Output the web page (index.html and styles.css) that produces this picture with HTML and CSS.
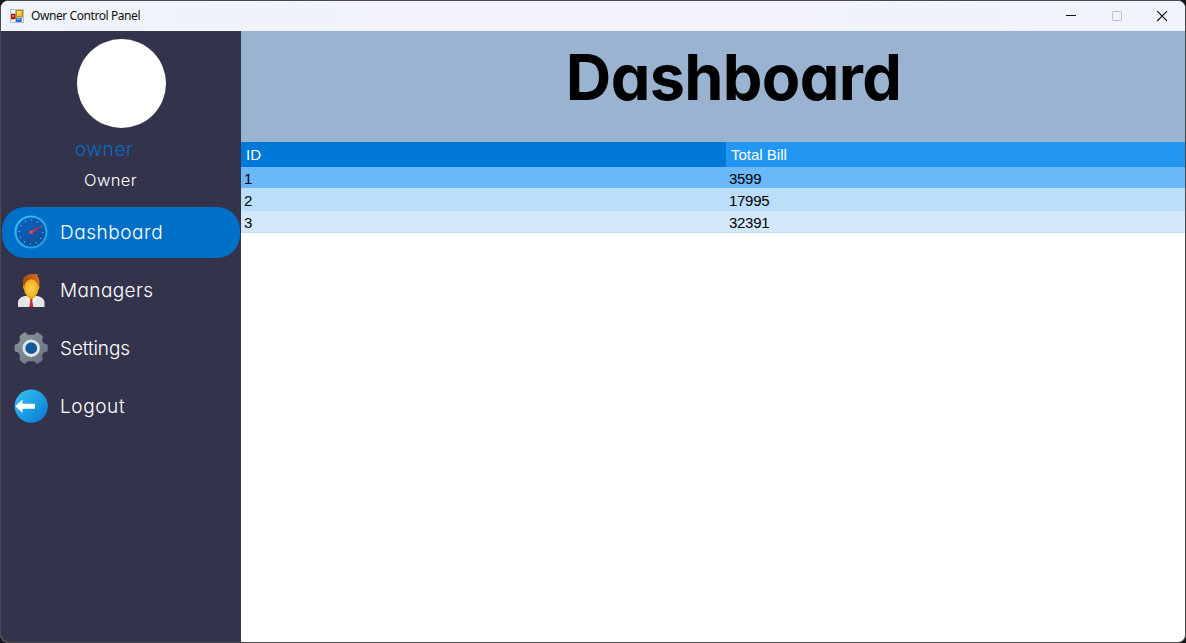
FILE: index.html
```html
<!DOCTYPE html>
<html lang="en">
<head>
<meta charset="utf-8">
<title>Owner Control Panel</title>
<link rel="stylesheet" href="styles.css">
</head>
<body>
<div class="window">
  <header class="titlebar">
    <svg class="app-icon" width="14" height="14" viewBox="0 0 14 14">
      <defs>
        <linearGradient id="gold" x2="1" y2="1"><stop stop-color="#fff0a0"/><stop offset="1" stop-color="#e8a400"/></linearGradient>
      </defs>
      <rect width="14" height="14" fill="#b9bcc2"/>
      <path d="M1 1h4v3H1zM1 11h4v2H1zM12 9h1v4h-1z" fill="#f4f6fa"/>
      <rect x="6.500" y="1.500" width="6" height="6" fill="url(#gold)" stroke="#c78a08"/>
      <rect x="1" y="5" width="4.500" height="5" fill="#b81810"/>
      <rect x="2" y="6" width="2" height="2" fill="#ef7768"/>
      <rect x="6" y="9" width="5.500" height="4" fill="#2a6ed8"/>
      <rect x="7" y="9.500" width="3" height="1.500" fill="#79aef5"/>
    </svg>
    <span class="window-title">Owner Control Panel</span>
    <div class="controls">
      <svg width="12" height="12" viewBox="0 0 12 12"><path d="M1 5.500h10" stroke="#111"/></svg>
      <svg width="12" height="12" viewBox="0 0 12 12"><rect x="1.500" y="1.500" width="9" height="9" rx=".8" fill="none" stroke="#c1c2c9"/></svg>
      <svg width="12" height="12" viewBox="0 0 12 12"><path d="M1.200 1.200l9.800 9.800M11 1.200L1.200 11" stroke="#111" stroke-width="1.100"/></svg>
    </div>
  </header>
  <div class="body">
    <aside class="sidebar">
      <div class="avatar"></div>
      <div class="username">owner</div>
      <div class="role">Owner</div>
      <nav class="menu">
        <a class="item active">
          <svg width="34" height="34" viewBox="0 0 34 34">
            <defs><linearGradient id="dial" x2="1" y2="1"><stop stop-color="#0b66cc"/><stop offset="1" stop-color="#114a8c"/></linearGradient>
            <linearGradient id="rim" x2="1" y2="1"><stop stop-color="#35c1f1"/><stop offset="1" stop-color="#199be2"/></linearGradient></defs>
            <circle cx="17" cy="17" r="15.500" fill="url(#dial)" stroke="url(#rim)" stroke-width="2.200"/>
            <circle cx="17" cy="17" r="11.800" fill="none" stroke="#35b6ee" stroke-width="1.300" stroke-dasharray="1.300 4.878" pathLength="74.140"/>
            <path d="M16.300 16.200L28.500 10.500 17.800 18.500z" fill="#e52d34"/>
            <circle cx="17" cy="17.200" r="1.700" fill="#f44f5a"/>
          </svg>
          <span class="label dashboard">Dashboard</span>
        </a>
        <a class="item">
          <svg width="34" height="34" viewBox="0 0 34 34">
            <defs><radialGradient id="face"><stop stop-color="#ffcf54"/><stop offset="1" stop-color="#f0af16"/></radialGradient>
            <linearGradient id="hair" x2="1"><stop stop-color="#a34b0c"/><stop offset="1" stop-color="#d5701f"/></linearGradient></defs>
            <path d="M4 34v-4.500c0-4 4-6.500 8-6.500h10c4 0 8.500 2.500 8.500 6.500V34z" fill="#e5e5e7"/>
            <path d="M13 21h8.500v4.200L17.300 28 13 25.200z" fill="#db9a0c"/>
            <path d="M12.500 23.500l4.800 3-3 3.500zM22 23.500l-4.700 3 3 3.500z" fill="#fff"/>
            <path d="M15.800 26h3l-.5 2.300 1 5.700h-4l1-5.700z" fill="#d32532"/>
            <path d="M9 12c-1.800-6.500 2.500-11 9-11h6l-.8 2c2.400 2 2.600 5.200 2 9l-2 2H11z" fill="url(#hair)"/>
            <ellipse cx="17.300" cy="15.500" rx="7.200" ry="9.200" fill="url(#face)"/>
            <path d="M10.200 12c-1.600-.3-1.500 4 .6 4.800zM24.400 12c1.600-.3 1.500 4-.6 4.800z" fill="#f0af16"/>
          </svg>
          <span class="label managers">Managers</span>
        </a>
        <a class="item">
          <svg width="34" height="34" viewBox="0 0 34 34">
            <defs><linearGradient id="gear" x2="1" y2="1"><stop stop-color="#8e979f"/><stop offset="1" stop-color="#64717c"/></linearGradient>
            <linearGradient id="hub" x2="1" y2="1"><stop stop-color="#0d61a9"/><stop offset="1" stop-color="#16528c"/></linearGradient></defs>
            <path d="M1 13.500L4.300 12.500 6 9.300 5.500 5.500Q7.500 2.500 11 1l2.800 2.800h6.400L23 1q3.500 1.500 6 4.500l-1 3.800 1.700 3.200 3.800 1q.8 3.500 0 7l-3.800 1L28 24.700l1 3.800q-2.500 3-6 4.500l-2.800-2.800h-6.400L11 33q-3.500-1.500-5.500-4.500l.5-3.800-1.700-3.200L1 20.500q-.8-3.500 0-7z" fill="url(#gear)"/>
            <circle cx="17.200" cy="17.200" r="7.300" fill="url(#hub)" stroke="#e3e7ea" stroke-width="2.800"/>
          </svg>
          <span class="label settings">Settings</span>
        </a>
        <a class="item">
          <svg width="34" height="34" viewBox="0 0 34 34">
            <defs><linearGradient id="exit" x2="1" y2="1"><stop stop-color="#35c5f4"/><stop offset="1" stop-color="#0875d4"/></linearGradient></defs>
            <circle cx="17.200" cy="17.200" r="16.600" fill="url(#exit)"/>
            <path d="M1.300 17.300L8.500 10.600v4.200h12.400v5H8.500v4.200z" fill="#fff"/>
          </svg>
          <span class="label logout">Logout</span>
        </a>
      </nav>
    </aside>
    <main class="content">
      <div class="banner"><h1>Dashboard</h1></div>
      <table class="grid">
        <colgroup><col class="col-id"><col></colgroup>
        <thead><tr><th class="sorted">ID</th><th>Total Bill</th></tr></thead>
        <tbody>
          <tr class="selected"><td>1</td><td>3599</td></tr>
          <tr class="odd"><td>2</td><td>17995</td></tr>
          <tr class="even"><td>3</td><td>32391</td></tr>
        </tbody>
      </table>
    </main>
  </div>
</div>
</body>
</html>
```

FILE: styles.css
```css
* { box-sizing: border-box; }
body { margin: 0; background: #171717; overflow: hidden; }
.window {
  width: 1186px; height: 643px; display: flex; flex-direction: column;
  border: 1px solid #4a4a4a; border-radius: 8px; overflow: hidden; background: #fff;
}
.titlebar {
  height: 30px; flex: none; display: flex; align-items: center;
  padding: 0 17px 1px 9px; background: linear-gradient(90deg, #eff3fb, #f2f2fa 50%, #eff3fb);
}
.app-icon { margin-right: 7px; }
.window-title { font: 12px "Noto Sans", "Open Sans", sans-serif; color: #111; letter-spacing: -.42px; }
.controls { margin-left: auto; display: flex; gap: 33.500px; }
.body { flex: 1; display: flex; min-height: 0; }
.sidebar {
  width: 240px; flex: none; background: #33334c; padding: 7.500px 1px 0;
  font-family: "Century Gothic", Inter, sans-serif; font-weight: 300; color: #fff;
  font-feature-settings: "cv11";
}
.avatar { width: 89px; height: 89px; margin-left: 74.500px; border-radius: 50%; background: #fff; }
.username { margin: 7px 0 0 73px; height: 30px; font-size: 19px; line-height: 30px; letter-spacing: .6px; color: #0c6ac2; }
.role { margin: 2px 0 0 82px; height: 29px; font-size: 16.500px; line-height: 27px; letter-spacing: .4px; }
.menu { display: flex; flex-direction: column; gap: 7px; margin-top: 11px; }
.item { height: 51px; display: flex; align-items: center; gap: 12px; padding-left: 12px; border-radius: 23px; }
.active { background: #006fc8; }
.label { font-size: 19px; line-height: 28px; padding-top: 2px; }
.dashboard { letter-spacing: .55px; }
.managers { letter-spacing: .4px; }
.settings { letter-spacing: -.1px; }
.logout { letter-spacing: .6px; }
.content { flex: 1; min-width: 0; }
.banner { height: 111px; background: #99b3d1; padding: 6px 0 0 41px; text-align: center; }
h1 { margin: 0; font: 700 63px/80px "Century Gothic", Inter, sans-serif; font-feature-settings: "cv11"; letter-spacing: -.7px; color: #000; }
.grid { width: 100%; border-collapse: collapse; table-layout: fixed; font: 15px "Liberation Sans", sans-serif; color: #000; }
.col-id { width: 485px; }
th { height: 25px; padding: 0 5px; text-align: left; font-weight: 400; color: #fff; background: #2196f3; }
th.sorted { background: #0078d7; }
td { height: 22px; padding: 1px 3px 0; line-height: 20px; letter-spacing: -.3px; }
.selected td { background: #6bb8f8; height: 21px; padding-top: 2px; line-height: 19px; }
.odd td { background: #bbdefb; height: 23px; padding-top: 2px; }
.even td { background: #d2e9fc; box-shadow: inset 0 -1px #bbdefb; }
```
